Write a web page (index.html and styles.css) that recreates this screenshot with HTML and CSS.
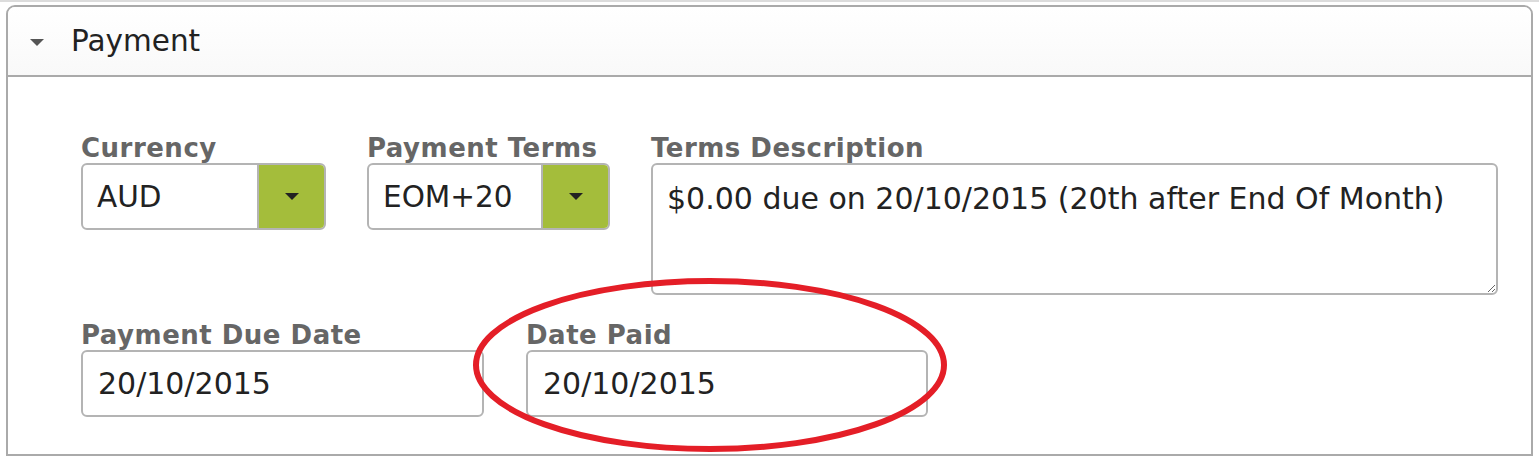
FILE: index.html
```html
<!DOCTYPE html>
<html>
<head>
<meta charset="utf-8">
<link rel="stylesheet" href="styles.css">
</head>
<body>
<div class="page">
  <div class="topline"></div>
  <section class="panel">
    <header class="panel-head">
      <span class="caret"></span>
      <span class="panel-title">Payment</span>
    </header>
    <div class="panel-body">
      <div class="row row-1">
        <div class="field f-currency">
          <label class="lbl">Currency</label>
          <div class="select">
            <span class="select-val">AUD</span>
            <span class="select-btn"><span class="tri"></span></span>
          </div>
        </div>
        <div class="field f-terms">
          <label class="lbl">Payment Terms</label>
          <div class="select">
            <span class="select-val">EOM+20</span>
            <span class="select-btn"><span class="tri"></span></span>
          </div>
        </div>
        <div class="field f-desc">
          <label class="lbl">Terms Description</label>
          <textarea class="area" readonly>$0.00 due on 20/10/2015 (20th after End Of Month)</textarea>
        </div>
      </div>
      <div class="row row-2">
        <div class="field f-due">
          <label class="lbl">Payment Due Date</label>
          <div class="input">20/10/2015</div>
        </div>
        <div class="field f-paid">
          <label class="lbl">Date Paid</label>
          <div class="input">20/10/2015</div>
        </div>
      </div>
    </div>
  </section>
  <svg class="ring" width="490" height="190" viewBox="0 0 490 190">
    <ellipse cx="245" cy="95" rx="234" ry="84" fill="none" stroke="#e41e27" stroke-width="6"/>
  </svg>
</div>
</body>
</html>
```
FILE: styles.css
```css
* { box-sizing: border-box; }
html, body { margin: 0; padding: 0; background: #fff; }
body { width: 1539px; height: 461px; overflow: hidden; font-family: "DejaVu Sans", Verdana, sans-serif; }
.page { position: relative; height: 461px; }
.topline { height: 2px; background: #dcdcdc; }
.panel {
  margin: 3px 6px 0 6px;
  border: 2px solid #aaa;
  border-radius: 9px 9px 0 0;
}
.panel-head {
  height: 70px;
  border-bottom: 2px solid #aaa;
  display: flex;
  align-items: center;
  padding-left: 22px;
  background: linear-gradient(#ffffff, #f9f9f9);
  border-radius: 7px 7px 0 0;
}
.caret {
  width: 0; height: 0;
  border-left: 7.5px solid transparent;
  border-right: 7.5px solid transparent;
  border-top: 7px solid #555;
  margin-right: 27px;
  margin-top: 2px;
}
.panel-title { font-size: 29.5px; color: #222; }
.panel-body { padding: 57px 33px 37px 73px; }
.row { display: flex; }
.row-1 { gap: 41px; margin-bottom: 26px; }
.row-2 { gap: 42px; }
.field { display: flex; flex-direction: column; }
.lbl {
  font-weight: bold;
  font-size: 26px;
  line-height: 28px;
  letter-spacing: 0.5px;
  color: #666;
  margin-bottom: 1px;
  white-space: nowrap;
}
.f-currency { width: 245px; }
.f-terms { width: 243px; }
.f-desc { width: 847px; }
.f-due { width: 403px; }
.f-paid { width: 402px; }
.select {
  display: flex;
  height: 67px;
  border: 2px solid #b4b4b4;
  border-radius: 6px;
  overflow: hidden;
}
.select-val {
  flex: 1;
  display: flex;
  align-items: center;
  padding-left: 14px;
  font-size: 29.5px;
  color: #222;
}
.select-btn {
  width: 67px;
  background: #a4bd3b;
  border-left: 2px solid #b4b4b4;
  display: flex;
  align-items: center;
  justify-content: center;
}
.tri {
  width: 0; height: 0;
  border-left: 7px solid transparent;
  border-right: 7px solid transparent;
  border-top: 7px solid #222;
}
.area {
  height: 132px;
  border: 2px solid #b4b4b4;
  border-radius: 6px;
  padding: 14px 14px;
  font-family: "DejaVu Sans", Verdana, sans-serif;
  font-size: 30px;
  line-height: 40px;
  color: #222;
  resize: both;
  outline: none;
  margin: 0;
}
.input {
  height: 67px;
  border: 2px solid #b4b4b4;
  border-radius: 6px;
  display: flex;
  align-items: center;
  padding-left: 15px;
  font-size: 30px;
  color: #222;
}
.ring { position: absolute; left: 465px; top: 270px; }
```
